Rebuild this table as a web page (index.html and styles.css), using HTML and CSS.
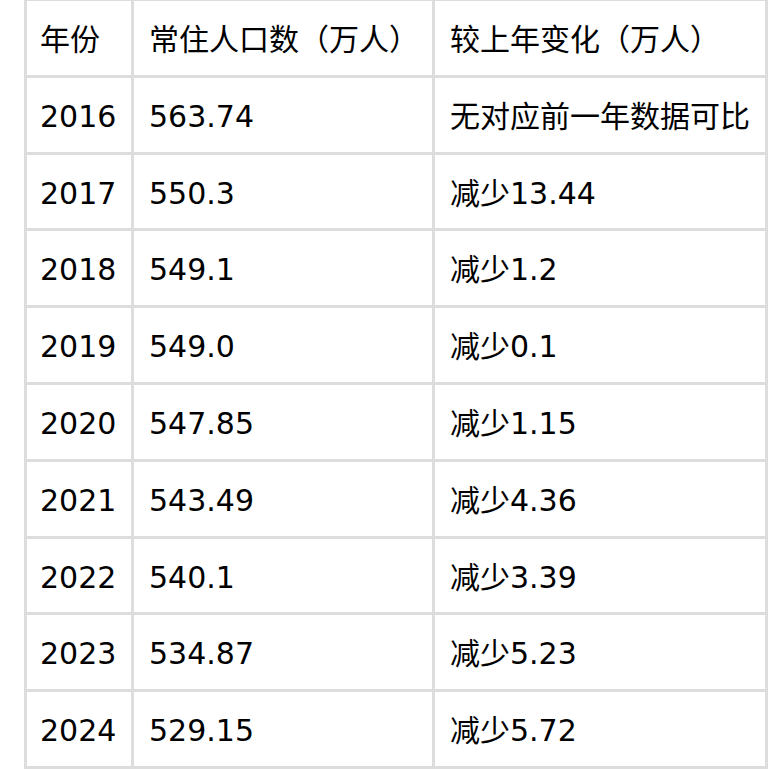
FILE: index.html
```html
<!DOCTYPE html>
<html lang="zh-CN">
<head>
<meta charset="utf-8">
<title>常住人口</title>
<link rel="stylesheet" href="styles.css">
</head>
<body>
<table class="data">
  <colgroup>
    <col class="c-year">
    <col class="c-pop">
    <col class="c-chg">
  </colgroup>
  <thead>
    <tr><th>年份</th><th>常住人口数（万人）</th><th>较上年变化（万人）</th></tr>
  </thead>
  <tbody>
    <tr><td>2016</td><td>563.74</td><td>无对应前一年数据可比</td></tr>
    <tr><td>2017</td><td>550.3</td><td>减少13.44</td></tr>
    <tr><td>2018</td><td>549.1</td><td>减少1.2</td></tr>
    <tr><td>2019</td><td>549.0</td><td>减少0.1</td></tr>
    <tr><td>2020</td><td>547.85</td><td>减少1.15</td></tr>
    <tr><td>2021</td><td>543.49</td><td>减少4.36</td></tr>
    <tr><td>2022</td><td>540.1</td><td>减少3.39</td></tr>
    <tr><td>2023</td><td>534.87</td><td>减少5.23</td></tr>
    <tr><td>2024</td><td>529.15</td><td>减少5.72</td></tr>
  </tbody>
</table>
</body>
</html>
```
FILE: styles.css
```css
html, body {
  margin: 0;
  padding: 0;
  background: #fff;
}
body {
  padding-left: 24px;
  font-family: "DejaVu Sans", "Noto Sans CJK SC", sans-serif;
  color: #000;
}
.data {
  margin-top: -2px;
  border-collapse: separate;
  border-spacing: 0;
  table-layout: fixed;
  width: 744px;
  border-left: 3px solid #ddd;
  border-top: 3px solid #ddd;
  font-size: 30px;
  line-height: 43.8px;
}
.c-year { width: 107px; }
.c-pop { width: 301px; }
.c-chg { width: 333px; }
.data th,
.data td {
  box-sizing: border-box;
  text-align: left;
  font-weight: normal;
  padding: 17px 8px 13px 15px;
  border-right: 3px solid #ddd;
  border-bottom: 3px solid #ddd;
  white-space: nowrap;
  vertical-align: middle;
}
.data th:first-child,
.data td:first-child {
  padding-left: 13px;
}
```
